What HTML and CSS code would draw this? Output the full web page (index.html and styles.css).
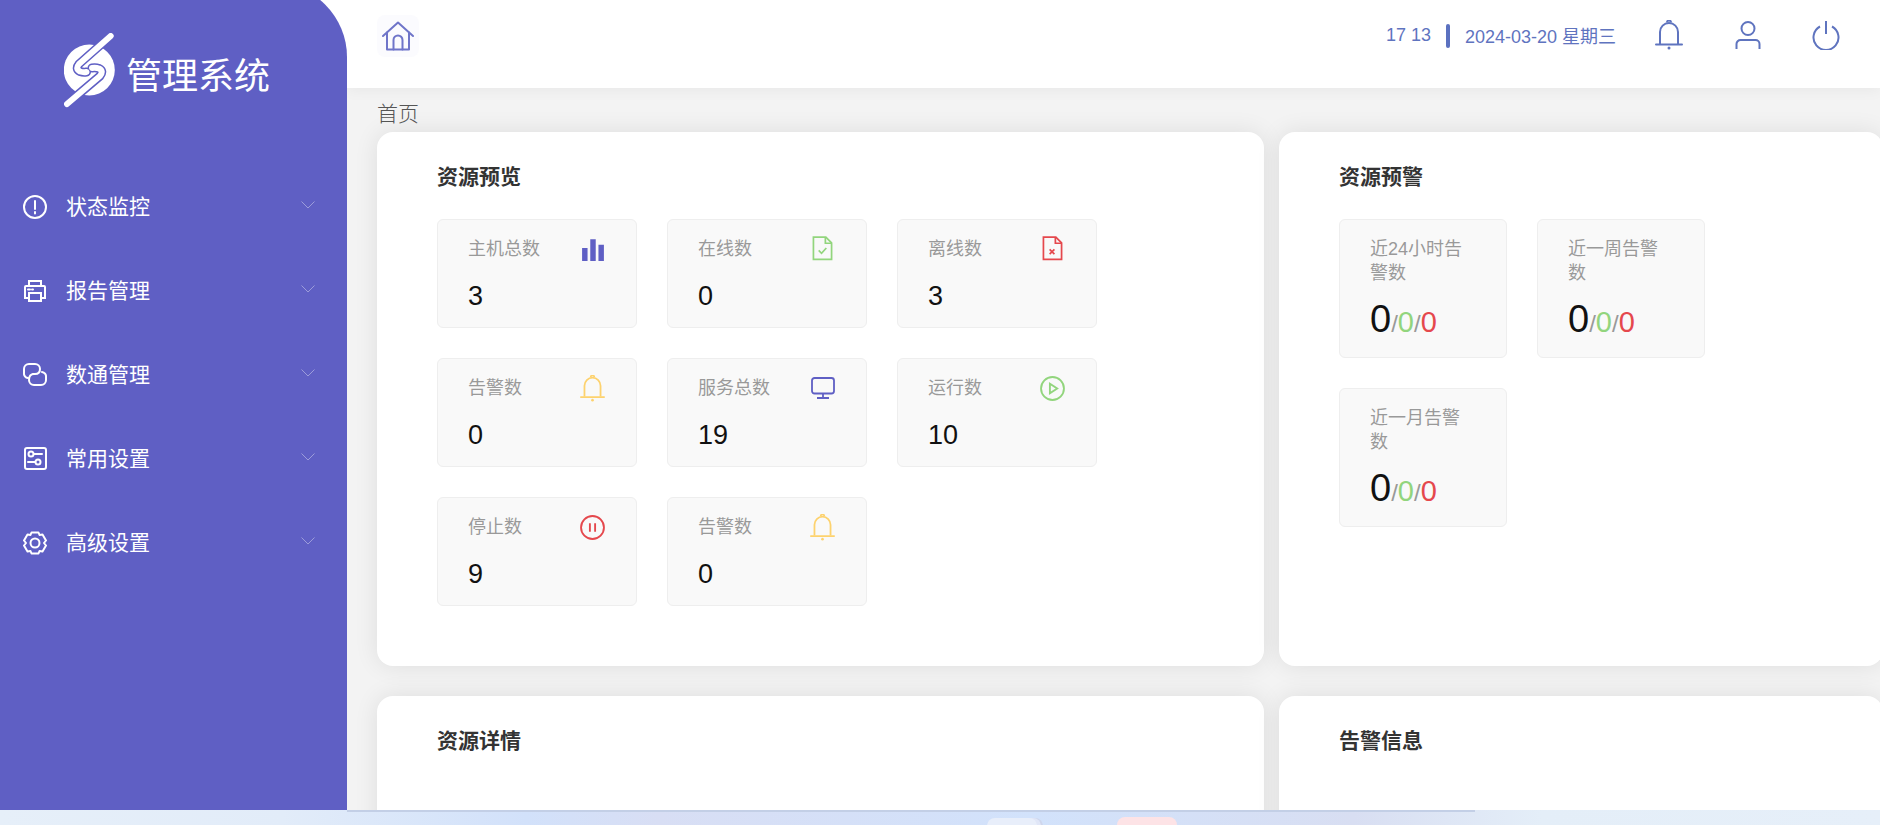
FILE: index.html
```html
<!DOCTYPE html>
<html lang="zh-CN">
<head>
<meta charset="utf-8">
<title>管理系统</title>
<link rel="stylesheet" href="styles.css">
</head>
<body>
<svg class="defs" width="0" height="0" aria-hidden="true">
  <symbol id="bell" viewBox="0 0 28 30" preserveAspectRatio="none">
    <path d="M5 24V12a9 9 0 0 1 18 0v12" fill="none" stroke="currentColor" stroke-width="2"/>
    <path d="M1 24.500h26" fill="none" stroke="currentColor" stroke-width="2" stroke-linecap="round"/>
    <path d="M12 2.500a2 2 0 0 1 4 0" fill="none" stroke="currentColor" stroke-width="2"/>
    <circle cx="14" cy="28" r="1.500" fill="currentColor"/>
  </symbol>
  <symbol id="chev" viewBox="0 0 14 8">
    <path d="M.5.5 7 7 13.500.5" fill="none" stroke="currentColor" stroke-width="1"/>
  </symbol>
</svg>
<div class="window">
  <aside class="sidebar">
    <div class="brand">
      <svg class="logo" viewBox="0 0 52 76" width="52" height="76">
        <circle cx="25.300" cy="37" r="25.500" fill="#fff"/>
        <path d="M46.700 3 15 31q-4 5 1 7.500 3 1 6.500.5" fill="none" stroke="#5f5fc4" stroke-width="9" stroke-linecap="round"/>
        <path d="M3 71 36 43q4-5-1-7.500-3-1-7-.5" fill="none" stroke="#5f5fc4" stroke-width="9" stroke-linecap="round"/>
        <path d="M46.700 3 15 31q-4 5 1 7.500 3 1 6.500.5" fill="none" stroke="#fff" stroke-width="6" stroke-linecap="round"/>
        <path d="M3 71 36 43q4-5-1-7.500-3-1-7-.5" fill="none" stroke="#fff" stroke-width="6" stroke-linecap="round"/>
      </svg>
      <span class="brand-name">管理系统</span>
    </div>
    <nav class="menu">
      <div class="menu-item">
        <svg class="menu-icon" viewBox="0 0 24 24"><circle cx="12" cy="12" r="11"/><path d="M12 6v8M12 17v1.500"/></svg>
        <span class="menu-text">状态监控</span>
        <svg class="chev"><use href="#chev"/></svg>
      </div>
      <div class="menu-item">
        <svg class="menu-icon" viewBox="0 0 24 24"><path d="M6 7V2h12v5M6 19H2V8a1 1 0 0 1 1-1h18a1 1 0 0 1 1 1v11h-4"/><path d="M6 14h12v8H6zM5 10.500h2M9 10.500h1"/></svg>
        <span class="menu-text">报告管理</span>
        <svg class="chev"><use href="#chev"/></svg>
      </div>
      <div class="menu-item">
        <svg class="menu-icon" viewBox="0 0 24 24"><path d="M5 15a4.500 4.500 0 0 1-4-5V6a5 5 0 0 1 5-5h6a5 5 0 0 1 5 5c0 4-2 5-5 5H10"/><path d="M19 9a4.500 4.500 0 0 1 4 5v3a5 5 0 0 1-5 5h-7a5 5 0 0 1-5-5c0-4 2-6 5-6"/></svg>
        <span class="menu-text">数通管理</span>
        <svg class="chev"><use href="#chev"/></svg>
      </div>
      <div class="menu-item">
        <svg class="menu-icon" viewBox="0 0 24 24"><rect x="2" y="1" width="21" height="21" rx="2"/><circle cx="8" cy="7" r="2.500"/><circle cx="15" cy="15" r="2.500"/><path d="M11 7h8M5 15h7"/></svg>
        <span class="menu-text">常用设置</span>
        <svg class="chev"><use href="#chev"/></svg>
      </div>
      <div class="menu-item">
        <svg class="menu-icon" viewBox="0 0 24 24"><circle cx="12" cy="12" r="4.500"/><path d="M8.500 1.500h7l1 2.500 3-.5 3.500 6-2 2.500 2 2.500-3.500 6-3-.5-1 2.500h-7l-1-2.500-3 .5-3.500-6 2-2.500-2-2.500 3.500-6 3 .5z" stroke-linejoin="round"/></svg>
        <span class="menu-text">高级设置</span>
        <svg class="chev"><use href="#chev"/></svg>
      </div>
    </nav>
  </aside>
  <div class="main">
    <header class="topbar">
      <div class="home-tile">
        <svg viewBox="0 0 32 30" width="32" height="30" class="home-icon"><path d="M1 15 16 1.500 31 15"/><path d="M5 11.500V28.500h22V11.500"/><path d="M11.500 28.500V19a4.500 4.500 0 0 1 9 0v9.500"/></svg>
      </div>
      <div class="top-right">
        <span class="clock">17 13</span>
        <span class="divider"></span>
        <span class="date">2024-03-20 星期三</span>
        <svg class="tool tool-bell"><use href="#bell"/></svg>
        <svg class="tool tool-user" viewBox="0 0 26 28"><circle cx="13" cy="7.500" r="6.500"/><path d="M1.500 28v-5a4 4 0 0 1 4-4h15a4 4 0 0 1 4 4v5"/></svg>
        <svg class="tool tool-power" viewBox="0 0 28 30"><path d="M8 6.500a12.500 12.500 0 1 0 12 0"/><path d="M14 1v13"/></svg>
      </div>
    </header>
    <div class="content">
      <div class="crumb">首页</div>
      <div class="panels">
        <section class="panel">
          <h2 class="panel-title">资源预览</h2>
          <div class="stats">
            <div class="stat">
              <div class="stat-head"><span class="stat-label">主机总数</span>
                <svg class="stat-icon" viewBox="0 0 22 22"><path class="fill-indigo" d="M1 10h5v12H1zM8.500 2h5v20h-5zM16 7h5v15h-5z"/></svg></div>
              <div class="stat-value">3</div>
            </div>
            <div class="stat">
              <div class="stat-head"><span class="stat-label">在线数</span>
                <svg class="stat-icon file-icon line-green" viewBox="0 0 22 26"><path d="M1.500 1h13l6 6v17.500h-19z"/><path d="M14 1v6.500h6.500"/><path d="M7 15l3 3 5-5.500"/></svg></div>
              <div class="stat-value">0</div>
            </div>
            <div class="stat">
              <div class="stat-head"><span class="stat-label">离线数</span>
                <svg class="stat-icon file-icon line-red" viewBox="0 0 22 26"><path d="M1.500 1h13l6 6v17.500h-19z"/><path d="M14 1v6.500h6.500"/><path d="M8 14l5 5M13 14l-5 5"/></svg></div>
              <div class="stat-value">3</div>
            </div>
            <div class="stat">
              <div class="stat-head"><span class="stat-label">告警数</span>
                <svg class="stat-icon bell-yellow"><use href="#bell"/></svg></div>
              <div class="stat-value">0</div>
            </div>
            <div class="stat">
              <div class="stat-head"><span class="stat-label">服务总数</span>
                <svg class="stat-icon line-indigo" viewBox="0 0 24 22"><rect x="1" y="1" width="22" height="15.500" rx="2.500"/><path d="M12 16.500V21M6 21h12"/></svg></div>
              <div class="stat-value">19</div>
            </div>
            <div class="stat">
              <div class="stat-head"><span class="stat-label">运行数</span>
                <svg class="stat-icon round-icon line-green" viewBox="0 0 24 24"><circle cx="12" cy="12" r="11"/><path d="M9.500 7.500v9l7-4.500z"/></svg></div>
              <div class="stat-value">10</div>
            </div>
            <div class="stat">
              <div class="stat-head"><span class="stat-label">停止数</span>
                <svg class="stat-icon round-icon line-red" viewBox="0 0 24 24"><circle cx="12" cy="12" r="11"/><path d="M9.500 8v8M14.500 8v8"/></svg></div>
              <div class="stat-value">9</div>
            </div>
            <div class="stat">
              <div class="stat-head"><span class="stat-label">告警数</span>
                <svg class="stat-icon bell-yellow"><use href="#bell"/></svg></div>
              <div class="stat-value">0</div>
            </div>
          </div>
        </section>
        <section class="panel">
          <h2 class="panel-title">资源预警</h2>
          <div class="alerts">
            <div class="alert">
              <div class="alert-label">近24小时告警数</div>
              <div class="alert-value"><span class="big">0</span><span class="sep">/</span><span class="ok">0</span><span class="sep">/</span><span class="bad">0</span></div>
            </div>
            <div class="alert">
              <div class="alert-label">近一周告警数</div>
              <div class="alert-value"><span class="big">0</span><span class="sep">/</span><span class="ok">0</span><span class="sep">/</span><span class="bad">0</span></div>
            </div>
            <div class="alert">
              <div class="alert-label">近一月告警数</div>
              <div class="alert-value"><span class="big">0</span><span class="sep">/</span><span class="ok">0</span><span class="sep">/</span><span class="bad">0</span></div>
            </div>
          </div>
        </section>
        <section class="panel">
          <h2 class="panel-title">资源详情</h2>
        </section>
        <section class="panel">
          <h2 class="panel-title">告警信息</h2>
        </section>
      </div>
    </div>
  </div>
</div>
<div class="taskbar">
  <span class="task-line"></span>
  <span class="task task-a"></span>
  <span class="task task-b"></span>
</div>
</body>
</html>
```

FILE: styles.css
```css
* { box-sizing: border-box; }
html, body { margin: 0; height: 100%; overflow: hidden; }
body {
  width: 1880px;
  height: 825px;
  font-family: "Liberation Sans", "Noto Sans CJK SC", sans-serif;
  background: #f3f3f3;
  display: flex;
  flex-direction: column;
}
.defs { position: absolute; }

.window { display: flex; height: 810px; flex: none; overflow: hidden; background: #fff; }

/* sidebar: the corner circle starts above the viewport */
.sidebar {
  width: 347px;
  flex: none;
  margin-top: -17px;
  background: #5f5fc4;
  border-top-right-radius: 74px;
  position: relative;
  z-index: 3;
  color: #fff;
}
.brand {
  display: flex;
  align-items: center;
  height: 76px;
  margin-top: 50px;
  padding-left: 64px;
  gap: 10px;
}
.logo { flex: none; }
.brand-name { font-size: 36px; line-height: 50px; margin-top: 11px; }
.menu { margin-top: 56px; }
.menu-item {
  display: flex;
  align-items: center;
  height: 84px;
  padding-left: 23px;
}
.menu-icon {
  width: 24px;
  height: 24px;
  fill: none;
  stroke: #fff;
  stroke-width: 2;
  flex: none;
  stroke-linecap: round;
}
.menu-text { font-size: 21px; margin-left: 19px; width: 235px; line-height: 30px; }
.chev { width: 14px; height: 8px; color: rgba(255, 255, 255, .38); margin-top: -4px; }

/* main */
.main { flex: 1; min-width: 0; display: flex; flex-direction: column; overflow: hidden; }
.topbar {
  height: 88px;
  flex: none;
  background: #fff;
  box-shadow: 0 2px 14px rgba(0, 0, 0, .05);
  display: flex;
  align-items: flex-start;
  justify-content: space-between;
  padding: 15px 40px 0 30px;
  position: relative;
  z-index: 2;
}
.home-tile {
  width: 42px;
  height: 42px;
  border-radius: 8px;
  background: #fbfbfe;
  display: flex;
  align-items: center;
  justify-content: center;
}
.home-icon { fill: none; stroke: #6f75c9; stroke-width: 2; stroke-linejoin: round; stroke-linecap: round; }
.top-right { display: flex; align-items: flex-start; color: #5f74bf; font-size: 18px; line-height: 24px; }
.clock { margin-top: 8px; }
.divider { width: 4px; height: 24px; border-radius: 2px; background: #5b71c0; margin: 9px 15px 0 15px; }
.date { margin-top: 10px; width: 190px; }
.tool { fill: none; stroke: #5f74bf; stroke-width: 2; color: #5f74bf; }
.tool-bell { width: 28px; height: 30px; margin-top: 5px; stroke: none; }
.tool-user { width: 26px; height: 28px; margin: 6px 0 0 52px; }
.tool-power { width: 28px; height: 30px; margin: 5px 0 0 51px; }

.content { flex: 1; padding-left: 30px; background: #f3f3f3; }
.crumb { font-size: 21px; line-height: 30px; height: 44px; padding-top: 11px; color: #555; font-weight: 300; }
.panels {
  display: grid;
  grid-template-columns: 887px 604px;
  grid-template-rows: 534px 300px;
  column-gap: 15px;
  row-gap: 30px;
}
.panel {
  background: #fff;
  border-radius: 16px;
  padding: 31px 60px;
  box-shadow: 0 0 24px rgba(0, 0, 0, .09);
}
.panel-title {
  margin: 0 0 29px;
  font-size: 21px;
  line-height: 27px;
  font-weight: 700;
  color: #333;
}

/* stat tiles */
.stats { display: flex; flex-wrap: wrap; gap: 30px; width: 670px; }
.stat {
  width: 200px;
  height: 109px;
  background: #f9f9f9;
  border: 1px solid #eeeeee;
  border-radius: 6px;
  padding: 16px 31px 0 30px;
}
.stat-head { display: flex; justify-content: space-between; align-items: flex-start; height: 28px; }
.stat-label { font-size: 18px; line-height: 26px; color: #999; }
.stat-icon { width: 24px; height: 24px; flex: none; margin-top: 1px; fill: none; stroke-width: 1.800; }
.file-icon { width: 21px; height: 25px; margin-right: 2px; margin-top: 0; }
.round-icon { width: 25px; height: 25px; }
.fill-indigo { fill: #5f5fc4; }
.line-green { stroke: #92d57d; }
.line-red { stroke: #e5484d; }
.line-indigo { stroke: #5f5fc4; }
.bell-yellow { color: #fdd26e; width: 25px; height: 27px; margin-top: 0; }
.stat-value { font-size: 27px; line-height: 36px; color: #111; margin-top: 14px; }

/* alert tiles */
.alerts { display: flex; flex-wrap: wrap; gap: 30px; width: 480px; }
.alert {
  width: 168px;
  height: 139px;
  background: #f9f9f9;
  border: 1px solid #eeeeee;
  border-radius: 6px;
  padding: 17px 30px 0 30px;
}
.alert-label { font-size: 18px; line-height: 24px; color: #999; height: 50px; }
.alert-value { margin-top: 8px; font-size: 29px; line-height: 48px; white-space: nowrap; }
.big { font-size: 38px; color: #111; }
.sep { font-size: 24px; color: #999; }
.ok { color: #92d57d; }
.bad { color: #e5484d; }

/* desktop strip below the window */
.taskbar {
  height: 15px;
  flex: none;
  background: linear-gradient(90deg, #e6eff9 0%, #e2ecf9 15%, #d2e1fa 28%, #d8def4 35%, #d2e2fb 55%, #d8def2 72%, #e4eef8 82%, #e6eff9 100%);
  position: relative;
  display: flex;
  padding-left: 987px;
  overflow: hidden;
}
.task-line { position: absolute; left: 347px; top: 0; width: 1128px; height: 2px; background: #c3cfe6; }
.task { display: block; margin-top: 7px; height: 20px; border-radius: 8px 8px 0 0; }
.task-a { width: 50px; margin-top: 8px; background: #e8eefa; box-shadow: 4px 0 0 #e0e6f7, 6px 0 0 #cfd6ec; }
.task-b { width: 60px; margin-left: 80px; background: #fde3e6; }
```
